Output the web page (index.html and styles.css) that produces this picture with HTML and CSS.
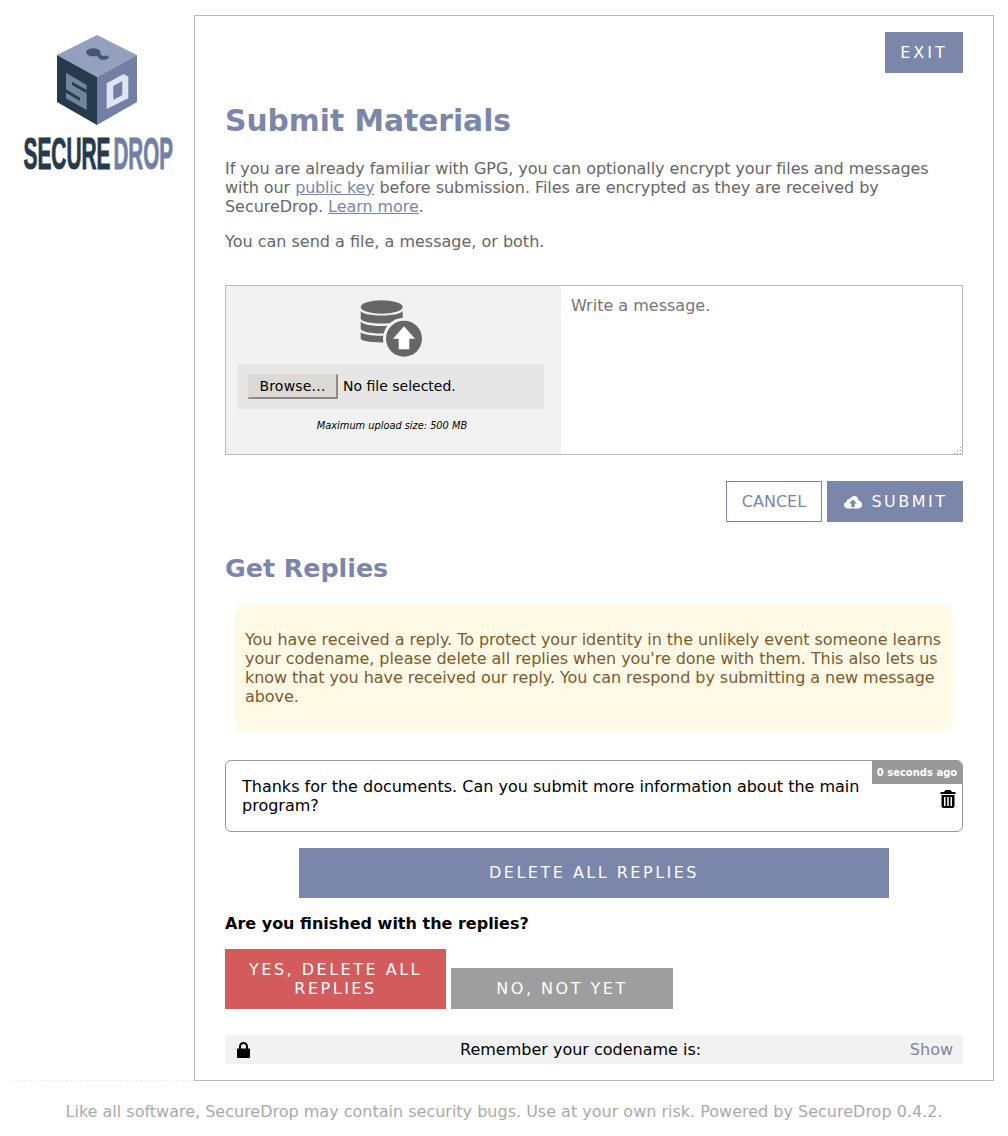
FILE: index.html
```html
<!DOCTYPE html>
<html lang="en">
<head>
<meta charset="utf-8">
<title>SecureDrop | Submit Materials</title>
<link rel="stylesheet" href="styles.css">
</head>
<body>
<div class="layout">
  <aside class="sidebar">
    <svg class="logo" width="152" height="140" viewBox="0 0 152 140" aria-label="SecureDrop">
      <polygon points="74,0 114,20 74,42 34,20" fill="#95a0bf"/>
      <polygon points="34,20 74,42 74,90 34,67" fill="#263a4d"/>
      <polygon points="114,20 74,42 74,90 114,67" fill="#7380a6"/>
      <ellipse cx="70.3" cy="17.3" rx="7.3" ry="4" fill="#46557a"/>
      <polygon points="74,17 80,21 85,20.5 86,23 82,25 77,24.5 74,21" fill="#46557a"/>
      <polygon points="43,37.7 63.7,50 63.7,75 43,63.3" fill="#72869a"/>
      <polygon points="49,46.7 63.7,55 63.7,58.3 49,50" fill="#263a4d"/>
      <polygon points="43,54.3 57,62.7 57,66 43,57.7" fill="#263a4d"/>
      <polygon points="83.7,48.3 100.5,39 105.3,41.5 105.3,63.3 83.7,74" fill="#dde4f2"/>
      <polygon points="90.3,51 99.3,46 99.3,60 90.3,65" fill="#7380a6"/>
      <text class="logo-text" x="0.5" y="134" textLength="87" lengthAdjust="spacingAndGlyphs" fill="#263a4d" stroke="#263a4d">SECURE</text>
      <text class="logo-text" x="90.5" y="134" textLength="59.5" lengthAdjust="spacingAndGlyphs" fill="#7380a6" stroke="#7380a6">DROP</text>
    </svg>
  </aside>
  <main class="panel">
    <div class="exit-row"><a class="btn btn-exit" href="#">EXIT</a></div>
    <h1 class="title">Submit Materials</h1>
    <p class="intro">If you are already familiar with GPG, you can optionally encrypt your files and messages with our <a class="intro-link" href="#">public key</a> before submission. Files are encrypted as they are received by SecureDrop. <a href="#">Learn more</a>.</p>
    <p class="intro intro-second">You can send a file, a message, or both.</p>

    <div class="composer">
      <div class="upload">
        <svg class="upload-icon" width="64" height="60" viewBox="0 0 64 60">
          <ellipse cx="21.7" cy="7" rx="21" ry="6.7" fill="#666"/>
          <path d="M0.7,11 C4,17 39,17 42.7,11 V19 C39,25 4,25 0.7,19 Z" fill="#666"/>
          <path d="M0.7,21.5 C4,27.5 39,27.5 42.7,21.5 V29 C39,35 4,35 0.7,29 Z" fill="#666"/>
          <path d="M0.7,32 C4,37 39,37 42.7,32 V39 C39,43.5 4,43.5 0.7,39 Z" fill="#666"/>
          <circle cx="44" cy="38.7" r="21" fill="#f2f2f2"/>
          <circle cx="44" cy="38.7" r="18" fill="#666"/>
          <path d="M44,26.3 L55,38.7 L49.3,38.7 L49.3,49.3 L38.7,49.3 L38.7,38.7 L33,38.7 Z" fill="#fff"/>
        </svg>
        <div class="file-row">
          <span class="browse">Browse...</span>
          <span class="file-name">No file selected.</span>
        </div>
        <p class="max-size">Maximum upload size: 500 MB</p>
      </div>
      <div class="message">
        <span class="placeholder">Write a message.</span>
        <svg class="resize" width="8" height="8" viewBox="0 0 8 8"><path d="M6,1h1v1h-1zM3,4h1v1h-1zM6,4h1v1h-1zM0,7h1v1h-1zM3,7h1v1h-1zM6,7h1v1h-1z" fill="#aaa"/></svg>
      </div>
    </div>

    <div class="actions">
      <a class="btn-cancel" href="#">CANCEL</a>
      <a class="btn btn-submit" href="#">
        <svg width="18" height="14" viewBox="0 0 18 14"><path d="M4,13.5 C1.5,13.5 0,11.8 0,10 C0,8.3 1.1,7 2.8,6.6 C2.8,4.6 4.4,3.4 6.2,3.8 C7,1.9 8.7,1 10.3,1 C12.8,1 14.6,3 14.5,5.6 C16.5,6 18,7.6 18,9.7 C18,12 16.2,13.5 14,13.5 Z" fill="#fff"/><path d="M9,4.6 L12.8,8.6 L10.6,8.6 L10.6,12 L7.4,12 L7.4,8.6 L5.2,8.6 Z" fill="#7b86ab"/></svg>
        <span>SUBMIT</span>
      </a>
    </div>

    <h2 class="subtitle">Get Replies</h2>
    <div class="notice">You have received a reply. To protect your identity in the unlikely event someone learns your codename, please delete all replies when you're done with them. This also lets us know that you have received our reply. You can respond by submitting a new message above.</div>

    <div class="reply">
      <p class="reply-text">Thanks for the documents. Can you submit more information about the main program?</p>
      <span class="reply-time">0 seconds ago</span>
      <svg class="trash" width="16" height="18" viewBox="0 0 16 18"><path d="M5.5,0 H10.5 L12,2 H15.5 V4 H0.5 V2 H4 Z M1.5,5 H14.5 V16 C14.5,17.2 13.7,18 12.5,18 H3.5 C2.3,18 1.5,17.2 1.5,16 Z" fill="#000"/><path d="M4,7 H5.5 V16 H4 Z M7.25,7 H8.75 V16 H7.25 Z M10.5,7 H12 V16 H10.5 Z" fill="#fff"/></svg>
    </div>

    <div class="delete-row"><a class="btn btn-delete" href="#">DELETE ALL REPLIES</a></div>
    <p class="confirm">Are you finished with the replies?</p>
    <div class="confirm-row">
      <a class="btn btn-yes" href="#">YES, DELETE ALL REPLIES</a>
      <a class="btn btn-no" href="#">NO, NOT YET</a>
    </div>

    <div class="codename">
      <svg class="lock" width="13" height="16" viewBox="0 0 13 16"><path d="M2,6.5 V4.5 C2,1.8 3.9,0 6.5,0 C9.1,0 11,1.8 11,4.5 V6.5 H12 C12.6,6.5 13,6.9 13,7.5 V15 C13,15.6 12.6,16 12,16 H1 C0.4,16 0,15.6 0,15 V7.5 C0,6.9 0.4,6.5 1,6.5 Z M4,6.5 H9 V4.5 C9,3 7.9,2 6.5,2 C5.1,2 4,3 4,4.5 Z" fill="#000" fill-rule="evenodd"/></svg>
      <span class="codename-label">Remember your codename is:</span>
      <a class="show" href="#">Show</a>
    </div>
  </main>
</div>
<footer class="footer">Like all software, SecureDrop may contain security bugs. Use at your own risk. Powered by SecureDrop 0.4.2.</footer>
</body>
</html>
```

FILE: styles.css
```css
* { box-sizing: border-box; }
html, body { margin: 0; padding: 0; }
body {
  font-family: "DejaVu Sans", sans-serif;
  font-size: 16px;
  line-height: 19px;
  color: #000;
  background: #fff;
  padding: 15px 14px 0 14px;
}
a { color: #7b86ab; }
.layout { display: flex; align-items: stretch; }
.sidebar {
  width: 180px;
  flex: none;
  border-bottom: 1px dashed #eee;
  padding: 20px 0 0 9px;
}
.logo { display: block; }
.logo-text {
  font-family: "Liberation Sans Narrow", "Liberation Sans", sans-serif;
  font-weight: 700;
  font-size: 44px;
  stroke-width: 1px;
}
.panel {
  width: 800px;
  height: 1066px;
  flex: none;
  border: 1px solid #bbb;
  padding: 16px 30px 0 30px;
}
.btn {
  display: block;
  background: #7b86ab;
  color: #fff;
  text-decoration: none;
  text-align: center;
  letter-spacing: 2.5px;
}
.exit-row { display: flex; justify-content: flex-end; }
.btn-exit { width: 78px; height: 41px; line-height: 41px; letter-spacing: 3px; }
.title {
  margin: 30px 0 0;
  font-size: 29.7px;
  line-height: 36px;
  font-weight: 700;
  color: #7b86ab;
}
.intro { margin: 20px 0 0; color: #666; letter-spacing: -0.05px; }
.intro-link { letter-spacing: -0.2px; }
.intro-second { margin-top: 16px; letter-spacing: 0; }
.composer {
  display: flex;
  height: 170px;
  margin-top: 34px;
  border: 1px solid #bbb;
}
.upload {
  width: 335px;
  flex: none;
  background: #f2f2f2;
  display: flex;
  flex-direction: column;
  align-items: center;
  padding: 14px 17px 0 12px;
}
.upload-icon { display: block; margin-left: 2px; }
.file-row {
  display: flex;
  align-items: center;
  align-self: stretch;
  height: 45px;
  margin-top: 4px;
  padding: 0 10px;
  background: #e6e6e6;
  font-size: 14px;
}
.browse {
  width: 90px;
  height: 25px;
  line-height: 23px;
  text-align: center;
  letter-spacing: 0.2px;
  background: #dcdad4;
  border: 1px solid #dcdad4;
  border-right: 2px solid #8f8b80;
  border-bottom: 2px solid #8f8b80;
}
.file-name { margin-left: 5px; }
.max-size {
  margin: 7px 0 0 2px;
  font-size: 9.8px;
  font-style: italic;
}
.message { flex: 1; position: relative; padding: 10px; }
.placeholder { color: #757575; }
.resize { position: absolute; right: 0; bottom: 0; }
.actions { display: flex; justify-content: flex-end; gap: 5px; margin-top: 26px; }
.btn-cancel {
  width: 96px;
  height: 41px;
  line-height: 39px;
  text-align: center;
  border: 1px solid #7b86ab;
  color: #7b86ab;
  text-decoration: none;
}
.btn-submit {
  width: 136px;
  height: 41px;
  display: flex;
  align-items: center;
  justify-content: center;
  gap: 9px;
  padding-left: 2px;
}
.subtitle {
  margin: 32px 0 0;
  font-size: 25.3px;
  line-height: 30px;
  font-weight: 700;
  color: #7b86ab;
}
.notice {
  margin: 20px 10px 0;
  height: 128px;
  padding: 26px 10px 0;
  background: #fffae6;
  border-radius: 10px;
  color: #7b5a2e;
  letter-spacing: -0.055px;
}
.reply {
  position: relative;
  height: 72px;
  margin-top: 28px;
  padding: 16px 16px 0;
  border: 1px solid #999;
  border-radius: 6px;
}
.reply-text { margin: 0; padding-right: 70px; }
.reply-time {
  position: absolute;
  top: 0;
  right: 0;
  width: 90px;
  height: 23px;
  line-height: 23px;
  text-align: center;
  background: #999;
  color: #fff;
  font-size: 10px;
  font-weight: 700;
  border-top-right-radius: 5px;
}
.trash { position: absolute; top: 29px; right: 6px; }
.delete-row { display: flex; justify-content: center; margin-top: 16px; }
.btn-delete { width: 590px; height: 50px; line-height: 50px; }
.confirm { margin: 16px 0 0; font-weight: 700; }
.confirm-row { display: flex; align-items: flex-end; gap: 5px; margin-top: 16px; }
.btn-yes {
  width: 221px;
  height: 60px;
  padding: 11px 15px 0;
  background: #d45b5b;
}
.btn-no {
  width: 222px;
  height: 41px;
  line-height: 41px;
  background: #9e9e9e;
}
.codename {
  position: relative;
  display: flex;
  align-items: center;
  height: 29px;
  margin-top: 26px;
  padding: 0 10px 0 12px;
  background: #f2f2f2;
}
.lock { flex: none; }
.codename-label { margin-left: 210px; }
.show { margin-left: auto; text-decoration: none; }
.footer {
  margin-top: 21px;
  text-align: center;
  color: #aaa;
}
```
